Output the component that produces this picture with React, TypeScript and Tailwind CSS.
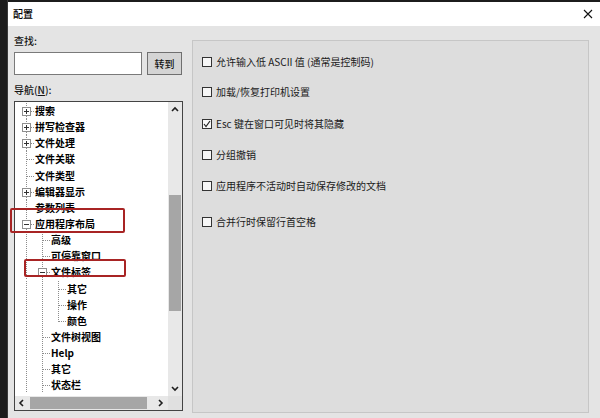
import type { ReactNode } from 'react'

type NavNode = { depth: number; label: string; toggle?: 'plus' | 'minus' }

const NAV: NavNode[] = [
  { depth: 1, label: '搜索', toggle: 'plus' },
  { depth: 1, label: '拼写检查器', toggle: 'plus' },
  { depth: 1, label: '文件处理', toggle: 'plus' },
  { depth: 1, label: '文件关联' },
  { depth: 1, label: '文件类型' },
  { depth: 1, label: '编辑器显示', toggle: 'plus' },
  { depth: 1, label: '参数列表' },
  { depth: 1, label: '应用程序布局', toggle: 'minus' },
  { depth: 2, label: '高级' },
  { depth: 2, label: '可停靠窗口' },
  { depth: 2, label: '文件标签', toggle: 'minus' },
  { depth: 3, label: '其它' },
  { depth: 3, label: '操作' },
  { depth: 3, label: '颜色' },
  { depth: 2, label: '文件树视图' },
  { depth: 2, label: 'Help' },
  { depth: 2, label: '其它' },
  { depth: 2, label: '状态栏' },
]

const OPTIONS = [
  { label: '允许输入低 ASCII 值 (通常是控制码)', checked: false, gap: 'mt-0' },
  { label: '加载/恢复打印机设置', checked: false, gap: 'mt-[18px]' },
  { label: 'Esc 键在窗口可见时将其隐藏', checked: true, gap: 'mt-[20px]' },
  { label: '分组撤销', checked: false, gap: 'mt-[19px]' },
  { label: '应用程序不活动时自动保存修改的文档', checked: false, gap: 'mt-[19px]' },
  { label: '合并行时保留行首空格', checked: false, gap: 'mt-[24px]' },
]

// 后面还有同级节点时竖线要继续往下；列表在可视区外还有内容，所以到底也算有
function hasNextSibling(i: number) {
  const d = NAV[i].depth
  for (let j = i + 1; j < NAV.length; j++) {
    if (NAV[j].depth < d) return false
    if (NAV[j].depth === d) return true
  }
  return true
}

function ancestorAt(i: number, level: number) {
  for (let j = i - 1; j >= 0; j--) if (NAV[j].depth === level) return j
  return 0
}

const DOT = { stroke: '#8c8c8c', strokeDasharray: '1 1', strokeWidth: 1 }

function TreeLines({ index }: { index: number }) {
  const node = NAV[index]
  const w = node.depth * 16
  const parts: ReactNode[] = []

  for (let k = 1; k < node.depth; k++) {
    if (hasNextSibling(ancestorAt(index, k))) {
      const x = (k - 1) * 16 + 8.5
      parts.push(<line key={'r' + k} x1={x} y1={0} x2={x} y2={16} {...DOT} />)
    }
  }

  const x0 = (node.depth - 1) * 16
  const cx = x0 + 8.5
  const down = hasNextSibling(index)

  if (node.toggle) {
    parts.push(<line key="t" x1={cx} y1={0} x2={cx} y2={4} {...DOT} />)
    if (down) parts.push(<line key="b" x1={cx} y1={13} x2={cx} y2={16} {...DOT} />)
    parts.push(<line key="h" x1={x0 + 13} y1={8.5} x2={w} y2={8.5} {...DOT} />)
    parts.push(
      <rect key="box" x={x0 + 4.5} y={4.5} width={8} height={8} fill="#fff" stroke="#8f8f8f" strokeWidth={1} />,
    )
    parts.push(<line key="m" x1={x0 + 6} y1={8.5} x2={x0 + 11} y2={8.5} stroke="#333" strokeWidth={1} />)
    if (node.toggle === 'plus')
      parts.push(<line key="p" x1={cx} y1={6} x2={cx} y2={11} stroke="#333" strokeWidth={1} />)
  } else {
    parts.push(<line key="v" x1={cx} y1={0} x2={cx} y2={down ? 16 : 8.5} {...DOT} />)
    parts.push(<line key="h" x1={cx} y1={8.5} x2={w} y2={8.5} {...DOT} />)
  }

  return (
    <svg width={w} height="100%" viewBox={`0 0 ${w} 16`} preserveAspectRatio="none" shapeRendering="crispEdges" className="shrink-0">
      {parts}
    </svg>
  )
}

function Chevron({ dir }: { dir: 'up' | 'down' | 'left' | 'right' }) {
  const pts = {
    up: '1,5 4,2 7,5',
    down: '1,2 4,5 7,2',
    left: '5,1 2,4 5,7',
    right: '2,1 5,4 2,7',
  }[dir]
  return (
    <svg width="8" height="8" viewBox="0 0 8 8">
      <polyline points={pts} fill="none" stroke="#1e1e1e" strokeWidth={1.6} />
    </svg>
  )
}

function Checkbox({ checked }: { checked: boolean }) {
  return (
    <span className="flex h-[10px] w-[10px] shrink-0 items-center justify-center border border-[#333] bg-[#f7f7f7]">
      {checked && (
        <svg width="8" height="8" viewBox="0 0 8 8">
          <polyline points="1,4 3,6.5 7,1" fill="none" stroke="#222" strokeWidth={1.2} />
        </svg>
      )}
    </span>
  )
}

export default function App() {
  return (
    <div
      className="flex h-[418px] w-[600px] overflow-hidden bg-[#1c1c1c] text-[#151515]"
      style={{ fontFamily: '"Noto Sans CJK SC", "Noto Sans", sans-serif' }}
    >
      <div className="w-[8px] shrink-0 border-r border-[#3a3a3a]" />
      <div className="mt-[2px] flex flex-1 flex-col">
        {/* 标题栏 */}
        <div className="flex h-[24px] items-center justify-between bg-white pl-[5px] pr-[7px]">
          <span className="text-[10px] font-medium leading-none text-black">配置</span>
          <svg width="10" height="10" viewBox="0 0 10 10">
            <path d="M1 1 L9 9 M9 1 L1 9" stroke="#111" strokeWidth={1.1} />
          </svg>
        </div>

        <div className="flex flex-1 bg-[#e4e4e4] pl-[6px] pr-[11px]">
          {/* 左侧：查找 + 导航树 */}
          <div className="relative flex w-[169px] shrink-0 flex-col pt-[8px]">
            <span className="h-[14px] text-[10px] font-medium leading-[14px]">查找:</span>
            <div className="mt-[4px] flex h-[23px] gap-[5px]">
              <div className="w-[128px] border border-[#7a7a7a] bg-white" />
              <div className="flex w-[35px] items-center justify-center border border-[#6f6f6f] bg-[#d4d4d4] text-[10px] font-medium">
                转到
              </div>
            </div>
            <span className="mt-[8px] h-[14px] text-[10px] font-medium leading-[14px]">
              导航(<span className="underline">N</span>):
            </span>

            <div className="mt-[4px] flex h-[310px] flex-col border border-[#444] bg-white">
              <div className="flex min-h-0 flex-1">
                <div className="min-w-0 flex-1 overflow-hidden pl-[3px] pt-[1px]">
                  {NAV.map((n, i) => (
                    <div key={i} className="flex h-[16.15px] items-stretch whitespace-nowrap">
                      <TreeLines index={i} />
                      <span className="ml-px self-center text-[10px] font-semibold leading-none text-black">{n.label}</span>
                    </div>
                  ))}
                </div>
                <div className="flex w-[14px] shrink-0 flex-col bg-[#e8e8e8]">
                  <div className="flex h-[15px] items-center justify-center">
                    <Chevron dir="up" />
                  </div>
                  <div className="h-[78px]" />
                  <div className="mx-[1px] h-[116px] bg-[#a6a6a6]" />
                  <div className="flex-1" />
                  <div className="flex h-[15px] items-center justify-center">
                    <Chevron dir="down" />
                  </div>
                </div>
              </div>
              <div className="flex h-[14px] shrink-0 bg-[#e8e8e8]">
                <div className="flex w-[14px] items-center justify-center">
                  <Chevron dir="left" />
                </div>
                <div className="my-[1px] ml-[1px] w-[117px] bg-[#a6a6a6]" />
                <div className="flex-1" />
                <div className="flex w-[14px] items-center justify-center">
                  <Chevron dir="right" />
                </div>
                <div className="w-[14px] bg-[#e0e0e0]" />
              </div>
            </div>

            {/* 标注框 */}
            <div className="pointer-events-none absolute left-[-4px] top-[182px] h-[25px] w-[115px] rounded-[2px] border-2 border-[#a82424]" />
            <div className="pointer-events-none absolute left-[10px] top-[233px] h-[18px] w-[102px] rounded-[2px] border-2 border-[#a82424]" />
          </div>

          {/* 右侧选项 */}
          <div className="ml-[9px] mt-[14px] mb-[5px] flex flex-1 flex-col border border-[#c6c6c6] bg-[#dddddd] pl-[9px] pt-[15px]">
            {OPTIONS.map((o) => (
              <div key={o.label} className={`flex h-[12px] items-center gap-[4px] ${o.gap}`}>
                <Checkbox checked={o.checked} />
                <span className="text-[10px] leading-none text-[#1a1a1a]">{o.label}</span>
              </div>
            ))}
          </div>
        </div>
      </div>
    </div>
  )
}
